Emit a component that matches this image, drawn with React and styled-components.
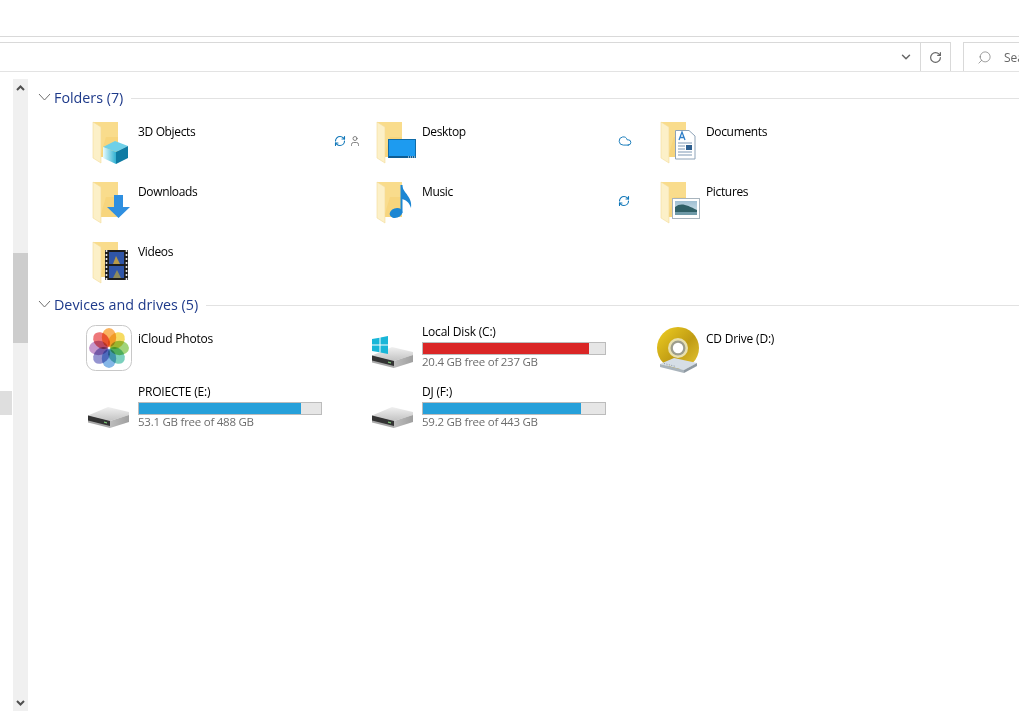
import styled, { createGlobalStyle } from "styled-components"
import { ChevronDown, RotateCw, Search, RefreshCw, User, Cloud } from "lucide-react"

const GlobalStyle = createGlobalStyle`
  html, body { margin: 0; padding: 0; background: #fff; }
  body { font-family: "Open Sans", "Noto Sans", "Liberation Sans", sans-serif; overflow: hidden; }
`

const Page = styled.div`
  width: 1019px;
  height: 716px;
  overflow: hidden;
  display: flex;
  flex-direction: column;
`
const TitleArea = styled.div`
  height: 36px;
  border-bottom: 1px solid #d9d9d9;
  margin-bottom: 5px;
`
const Toolbar = styled.div`
  height: 30px;
  box-sizing: border-box;
  display: flex;
  gap: 12px;
  border-bottom: 1px solid #e3e3e3;
`
const AddressBox = styled.div`
  width: 951px;
  flex: none;
  box-sizing: border-box;
  display: flex;
  justify-content: flex-end;
  border: 1px solid #d9d9d9;
  border-left: none;
  border-bottom: none;
`
const AddressButton = styled.div`
  width: ${p => p.$w}px;
  display: flex;
  align-items: center;
  justify-content: center;
  color: #666;
  border-left: ${p => (p.$divided ? "1px solid #d9d9d9" : "none")};
`
const SearchBox = styled.div`
  flex: 1;
  min-width: 0;
  display: flex;
  align-items: center;
  gap: 12px;
  padding-left: 13px;
  border: 1px solid #d9d9d9;
  border-right: none;
  border-bottom: none;
  font-size: 12px;
  color: #666;
  overflow: hidden;
  white-space: nowrap;
`
const SearchGlyph = styled(Search)`
  flex: none;
  transform: scaleX(-1);
`
const Body = styled.div`
  flex: 1;
  display: grid;
  grid-template-columns: 13px 15px 1fr;
  min-height: 0;
`
const NavPane = styled.div`
  padding-top: 319px;
`
const NavStub = styled.div`
  width: 12px;
  height: 24px;
  background: #dedede;
`
const Scrollbar = styled.div`
  margin: 7px 0 5px;
  background: #f0f0f0;
  display: flex;
  flex-direction: column;
`
const ScrollButton = styled.div`
  height: 17px;
  flex: none;
  display: flex;
  align-items: center;
  justify-content: center;
  color: #505050;
`
const ScrollTrack = styled.div`
  flex: 1;
  padding-top: 157px;
`
const ScrollThumb = styled.div`
  height: 90px;
  background: #cdcdcd;
`
const Content = styled.main`
  padding: 15px 0 0 10px;
`
const SectionBlock = styled.section`
  & + & > div:first-child {
    margin-top: -1px;
    margin-bottom: 11px;
  }
`
const SectionHeader = styled.div`
  height: 20px;
  display: flex;
  align-items: center;
  margin-bottom: 10px;
  color: #1e3a8a;
  font-size: 14.3px;
  white-space: nowrap;
`
const Caret = styled.svg`
  width: 13px;
  height: 8px;
  margin-right: 3px;
  flex: none;
`
const HeaderLine = styled.div`
  flex: 1;
  height: 1px;
  background: #e2e2e2;
  margin: 2px 0 0 8px;
`
const TileGrid = styled.div`
  display: grid;
  grid-template-columns: repeat(3, 284px);
  grid-auto-rows: 48px;
  row-gap: 12px;
  padding-left: 48px;
  margin-bottom: 10px;
`
const Tile = styled.div`
  display: grid;
  grid-template-columns: 48px 192px auto;
  column-gap: 4px;
  font-size: 12px;
  color: #000;
`
const TileIcon = styled.svg`
  width: 48px;
  height: 48px;
  display: block;
`
const TileText = styled.div`
  padding-top: 6px;
  line-height: 18px;
  white-space: nowrap;
  letter-spacing: -0.35px;
`
const DeviceLabel = styled(TileText)`
  padding-top: 5px;
  letter-spacing: -0.2px;
`
const StatusIcons = styled.div`
  display: flex;
  align-items: center;
  gap: 3px;
  height: 48px;
  color: #0f76b8;
`
const DriveText = styled.div`
  width: 184px;
  white-space: nowrap;
  line-height: 14px;
  letter-spacing: -0.2px;
`
const DriveBar = styled.div`
  height: 11px;
  margin-top: 3px;
  border: 1px solid #bcbcbc;
  background: #e6e6e6;
`
const DriveFill = styled.div`
  height: 100%;
  background: ${p => (p.$full ? "#da2626" : "#26a0da")};
`
const DriveFree = styled.div`
  color: #6d6d6d;
  font-size: 11.5px;
  letter-spacing: -0.25px;
`
const Petal = styled.ellipse`
  mix-blend-mode: multiply;
  opacity: 0.82;
`

const FolderBase = () => (
  <>
    <path d="M7 5 H32 V40 H14 L7 36 Z" fill="#f9dc8c" />
    <path d="M20 20 H32 V40 H14 Z" fill="#f5cb6a" opacity=".45" />
    <path d="M7 5 L15 10 V46 L7 41 Z" fill="#fcf0c8" stroke="#f4dc98" strokeWidth=".6" />
  </>
)

const CubeOverlay = () => (
  <>
    <defs>
      <linearGradient id="cubeLeft" x1="0" y1="0" x2="1" y2="0">
        <stop offset="0" stopColor="#e6fbfd" />
        <stop offset="1" stopColor="#2fb0d2" />
      </linearGradient>
    </defs>
    <path d="M17 30 L29 24 L42 29 L30 35 Z" fill="#6fd0e8" />
    <path d="M17 30 L30 35 V47 L17 41 Z" fill="url(#cubeLeft)" />
    <path d="M30 35 L42 29 V41 L30 47 Z" fill="#0f7ba3" />
  </>
)

const ArrowOverlay = () => (
  <path d="M28 18 H37 V30 H44 L32.5 41 L21 30 H28 Z" fill="#2f8fe0" />
)

const DesktopOverlay = () => (
  <>
    <rect x="18.5" y="22.5" width="27" height="18" fill="#1d9bf0" stroke="#0f6ba8" />
    <path d="M19 39 H45 V41 H19 Z" fill="#0d5d94" />
    <path d="M38 40 H45" stroke="#fff" strokeDasharray="1 1" />
  </>
)

const MusicOverlay = () => (
  <>
    <ellipse cx="26" cy="36" rx="6.5" ry="4.8" fill="#1b86d3" transform="rotate(-18 26 36)" />
    <path d="M30.5 8 H32.5 V36 H30.5 Z" fill="#1b86d3" />
    <path d="M32 8 C33 16 43 20 41 31 C39 25 36 23 32 22 Z" fill="#1b86d3" />
  </>
)

const DocumentOverlay = () => (
  <>
    <path d="M21.5 13.5 H35 L41 19 V42 H21.5 Z" fill="#fff" stroke="#8ea3b8" />
    <path d="M25 23 L28 15 L31 23 M26 20.5 H30" fill="none" stroke="#2f7fc8" strokeWidth="1.3" />
    <path d="M24 26 H38 M24 29 H31 M24 32 H31 M24 35 H38 M24 38 H38" stroke="#7d97b3" />
    <rect x="32" y="28" width="6" height="5" fill="#2e5f8f" />
  </>
)

const PictureOverlay = () => (
  <>
    <defs>
      <linearGradient id="pictureSky" x1="0" y1="0" x2="0" y2="1">
        <stop offset="0" stopColor="#9fbfd2" />
        <stop offset="1" stopColor="#d6e8ee" />
      </linearGradient>
    </defs>
    <rect x="18.5" y="21.5" width="27" height="20" fill="#fff" stroke="#a8b4bd" />
    <rect x="21" y="24" width="22" height="14" fill="url(#pictureSky)" />
    <path d="M21 30 C27 25 33 28 43 33 V38 H21 Z" fill="#2f5f66" />
    <path d="M21 35 H43 V38 H21 Z" fill="#6f9aa8" />
  </>
)

const FilmOverlay = () => (
  <>
    <rect x="19" y="13" width="23" height="30" fill="#1d1d1d" />
    <path d="M20.5 13 V43 M40.5 13 V43" stroke="#e8e8e8" strokeWidth="1.6" strokeDasharray="2 2" />
    <rect x="23" y="15" width="15" height="12" fill="#2f55a8" />
    <rect x="23" y="29" width="15" height="12" fill="#2f55a8" />
    <path d="M27 27 L30 19 L34 27 Z" fill="#b89a48" />
    <path d="M27 41 L31 33 L35 41 Z" fill="#8d8a5a" />
  </>
)

const folderOverlays = {
  cube: CubeOverlay,
  arrow: ArrowOverlay,
  desktop: DesktopOverlay,
  music: MusicOverlay,
  document: DocumentOverlay,
  picture: PictureOverlay,
  film: FilmOverlay,
}

const FolderIcon = ({ overlay }) => {
  const Overlay = folderOverlays[overlay]
  return (
    <TileIcon viewBox="0 0 48 48">
      <FolderBase />
      <Overlay />
    </TileIcon>
  )
}

const HddShape = () => (
  <>
    <defs>
      <linearGradient id="hddTop" x1="0" y1="0" x2="0" y2="1">
        <stop offset="0" stopColor="#f0f0f0" />
        <stop offset="1" stopColor="#c2c2c2" />
      </linearGradient>
      <linearGradient id="hddSide" x1="0" y1="0" x2="1" y2="0">
        <stop offset="0" stopColor="#bdbdbd" />
        <stop offset="1" stopColor="#a0a0a0" />
      </linearGradient>
    </defs>
    <path d="M2 30.5 L22 22 L43 27 V30 L24 36 Z" fill="url(#hddTop)" />
    <path d="M2 30.5 L24 36 V43 L2 37.5 Z" fill="#a8a8a8" />
    <path d="M2 30.5 L24 36 V41 L2 35.5 Z" fill="#333" />
    <path d="M18 36.5 L21 37.3 V38.5 L18 37.7 Z" fill="#7cc576" />
    <path d="M24 36 L43 30 V37 L24 43 Z" fill="url(#hddSide)" />
  </>
)

const HddIcon = () => (
  <TileIcon viewBox="0 0 48 48">
    <HddShape />
  </TileIcon>
)

const SystemHddIcon = () => (
  <TileIcon viewBox="0 0 48 48">
    <HddShape />
    <path d="M2 14 L9.5 12.7 V19.5 H2 Z M10.5 12.5 L18 11 V19.5 H10.5 Z M2 20.5 H9.5 V27.3 L2 26 Z M10.5 20.5 H18 V29 L10.5 27.5 Z" fill="#19b6d8" />
  </TileIcon>
)

const petals = ["#f9a23c", "#f4d33f", "#8ccb5c", "#5ec6ae", "#69a6e2", "#7d7cc6", "#b981c2", "#ea5a5c"]

const PhotosIcon = () => (
  <TileIcon viewBox="0 0 48 48">
    <rect x=".5" y=".5" width="45" height="45" rx="9" fill="#fff" stroke="#c8c8c8" />
    {petals.map((color, i) => (
      <Petal key={color} cx="23" cy="12.5" rx="7.2" ry="9.5" fill={color} transform={`rotate(${i * 45} 23 23)`} />
    ))}
  </TileIcon>
)

const CdIcon = () => (
  <TileIcon viewBox="0 0 48 48">
    <defs>
      <linearGradient id="cdGold" x1="0" y1="0" x2="1" y2="1">
        <stop offset="0" stopColor="#f0cf22" />
        <stop offset=".55" stopColor="#c09c14" />
        <stop offset="1" stopColor="#e6c636" />
      </linearGradient>
    </defs>
    <circle cx="24" cy="23" r="21" fill="url(#cdGold)" />
    <circle cx="24" cy="23" r="10" fill="#e8e0b0" />
    <circle cx="24" cy="23" r="7.5" fill="#9d9d8c" />
    <circle cx="24" cy="23" r="5.2" fill="#fff" />
    <path d="M6 39 L20 33 L43 38 L30 45 Z" fill="#d6dee6" />
    <path d="M6 39 L30 45 V48 L6 42 Z" fill="#aab4bc" />
    <path d="M30 45 L43 38 V41 L30 48 Z" fill="#8f9aa3" />
    <path d="M10 38.5 L22 41.5" stroke="#8d9aa5" strokeDasharray="1 1.5" />
  </TileIcon>
)

const folders = [
  { name: "3D Objects", overlay: "cube", status: "shared" },
  { name: "Desktop", overlay: "desktop", status: "cloud" },
  { name: "Documents", overlay: "document" },
  { name: "Downloads", overlay: "arrow" },
  { name: "Music", overlay: "music", status: "sync" },
  { name: "Pictures", overlay: "picture" },
  { name: "Videos", overlay: "film" },
]

const FolderStatus = ({ status }) => {
  if (!status) return null
  return (
    <StatusIcons>
      {status === "cloud" ? <Cloud size={14} strokeWidth={1.6} /> : <RefreshCw size={12} strokeWidth={2.2} />}
      {status === "shared" && <User size={12} strokeWidth={1.6} color="#666" />}
    </StatusIcons>
  )
}

const Drive = ({ name, free, total, percent, full }) => (
  <DriveText>
    <div>{name}</div>
    <DriveBar>
      <DriveFill $full={full} style={{ width: `${percent}%` }} />
    </DriveBar>
    <DriveFree>{free} GB free of {total} GB</DriveFree>
  </DriveText>
)

const Section = ({ title, children }) => (
  <SectionBlock>
    <SectionHeader>
      <Caret viewBox="0 0 13 8">
        <path d="M1 1 L6.5 7 L12 1" fill="none" stroke="#6f6f6f" />
      </Caret>
      {title}
      <HeaderLine />
    </SectionHeader>
    <TileGrid>{children}</TileGrid>
  </SectionBlock>
)

export default function App() {
  return (
    <Page>
      <GlobalStyle />
      <TitleArea />
      <Toolbar>
        <AddressBox>
          <AddressButton $w={29}>
            <ChevronDown size={14} strokeWidth={2.5} />
          </AddressButton>
          <AddressButton $w={29} $divided>
            <RotateCw size={13} strokeWidth={2.2} />
          </AddressButton>
        </AddressBox>
        <SearchBox>
          <SearchGlyph size={15} strokeWidth={1} />
          Search
        </SearchBox>
      </Toolbar>
      <Body>
        <NavPane>
          <NavStub />
        </NavPane>
        <Scrollbar>
          <ScrollButton>
            <svg width="9" height="6" viewBox="0 0 9 6">
              <path d="M1 5 L4.5 1.5 L8 5" fill="none" stroke="currentColor" strokeWidth="2" />
            </svg>
          </ScrollButton>
          <ScrollTrack>
            <ScrollThumb />
          </ScrollTrack>
          <ScrollButton>
            <svg width="9" height="6" viewBox="0 0 9 6">
              <path d="M1 1 L4.5 4.5 L8 1" fill="none" stroke="currentColor" strokeWidth="2" />
            </svg>
          </ScrollButton>
        </Scrollbar>
        <Content>
          <Section title="Folders (7)">
            {folders.map(f => (
              <Tile key={f.name}>
                <FolderIcon overlay={f.overlay} />
                <TileText>{f.name}</TileText>
                <FolderStatus status={f.status} />
              </Tile>
            ))}
          </Section>
          <Section title="Devices and drives (5)">
            <Tile>
              <PhotosIcon />
              <DeviceLabel>iCloud Photos</DeviceLabel>
            </Tile>
            <Tile>
              <SystemHddIcon />
              <Drive name="Local Disk (C:)" free="20.4" total="237" percent={91} full />
            </Tile>
            <Tile>
              <CdIcon />
              <DeviceLabel>CD Drive (D:)</DeviceLabel>
            </Tile>
            <Tile>
              <HddIcon />
              <Drive name="PROIECTE (E:)" free="53.1" total="488" percent={89} />
            </Tile>
            <Tile>
              <HddIcon />
              <Drive name="DJ (F:)" free="59.2" total="443" percent={87} />
            </Tile>
          </Section>
        </Content>
      </Body>
    </Page>
  )
}
